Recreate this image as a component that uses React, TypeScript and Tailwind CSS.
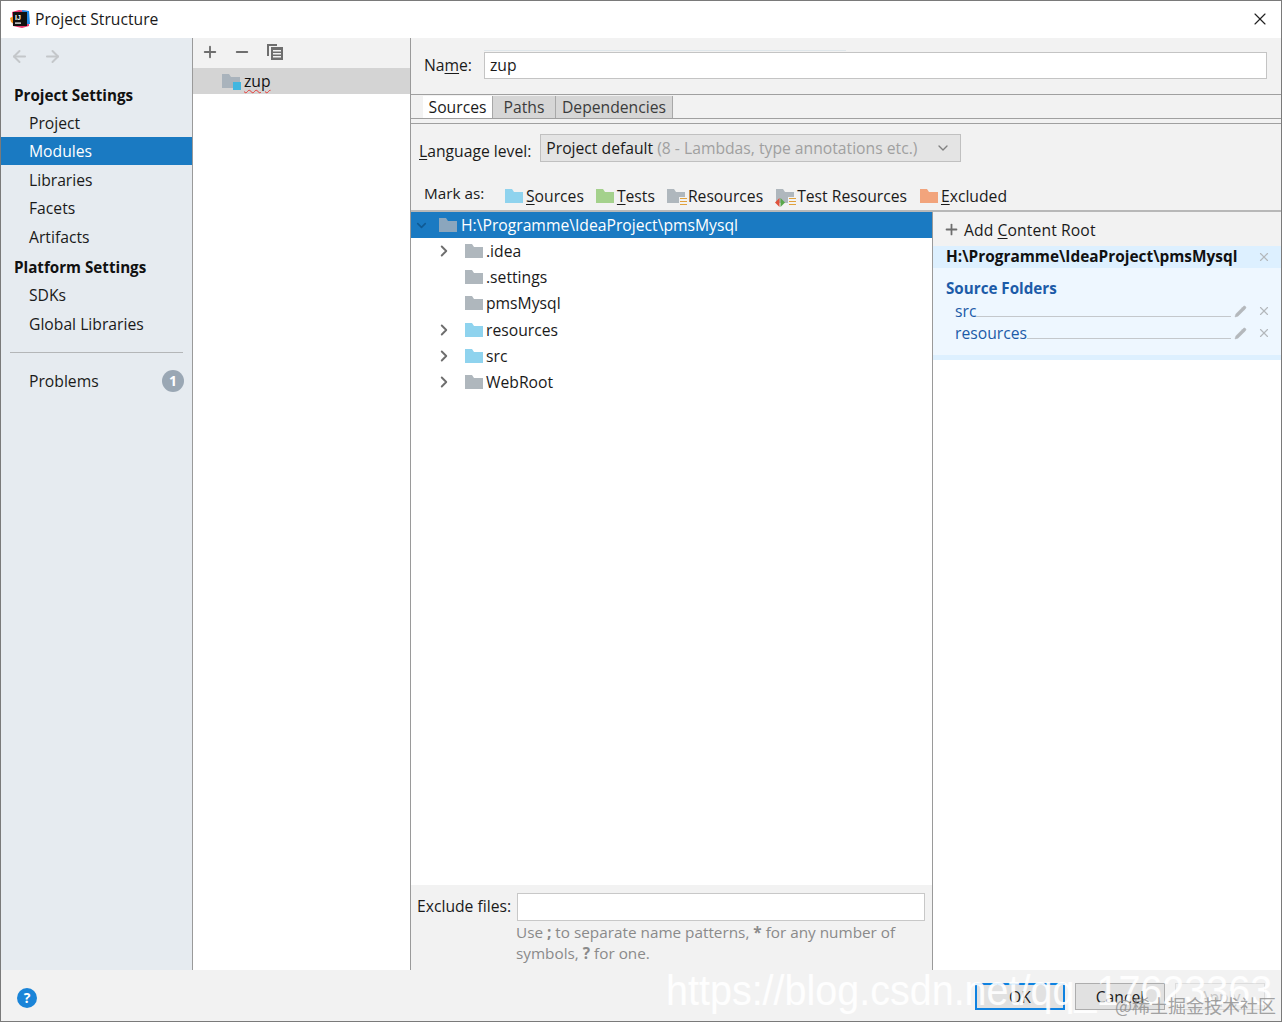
import type { ReactNode } from 'react';
import { Plus, Minus, ArrowLeft, ArrowRight, ChevronDown, ChevronRight, X, Pencil } from 'lucide-react';

const font = 'font-["Open_Sans","Noto_Sans","Noto_Sans_CJK_SC",sans-serif]';

function Folder({ color = '#afb7bd', className = '' }: { color?: string; className?: string }) {
  return (
    <svg width="18" height="14" viewBox="0 0 18 14" className={`shrink-0 ${className}`}>
      <path d="M0 0h7l2 3h9v11H0z" fill={color} />
    </svg>
  );
}

function U({ children }: { children: ReactNode }) {
  return <span className="underline underline-offset-2 decoration-1">{children}</span>;
}

function NavItem({ label, active, h = 'h-[29px]' }: { label: string; active?: boolean; h?: string }) {
  return (
    <div className={`${h} flex items-center pl-7 ${active ? 'bg-[#1a7ac2] text-white' : 'text-[#1a1a1a]'}`}>
      {label}
    </div>
  );
}

function TreeRow({ label, color, arrow }: { label: string; color?: string; arrow?: boolean }) {
  return (
    <div className="h-[26.2px] flex items-center text-[#1a1a1a]">
      <div className="w-[54px] pl-[28px] shrink-0">
        {arrow && <ChevronRight size={18} strokeWidth={2.5} className="text-[#6e6e6e] -ml-[4px]" />}
      </div>
      <Folder color={color} />
      <span className="ml-[3px]">{label}</span>
    </div>
  );
}

function MarkItem({ color, children, badge }: { color: string; children: ReactNode; badge?: ReactNode }) {
  return (
    <div className="flex items-center">
      <div className="relative w-[18px] h-[14px] mr-[3px]">
        <Folder color={color} />
        {badge}
      </div>
      <span>{children}</span>
    </div>
  );
}

function SourceRow({ label }: { label: string }) {
  return (
    <div className="h-[22px] flex items-center pl-[22px] pr-[10px] text-[#1c5ba8]">
      <span>{label}</span>
      <div className="flex-1 h-[1px] bg-[#c4c8cc] mt-[10px]" />
      <Pencil size={13} fill="#b4b8bc" strokeWidth={1} className="text-[#b4b8bc] ml-[3px] mr-[10px]" />
      <X size={14} className="text-[#b4b8bc]" />
    </div>
  );
}

function ResBadge() {
  return (
    <div className="absolute right-[-3px] bottom-[-3px] w-[9px] h-[9px] bg-[#f2f2f2] flex flex-col justify-between p-[1px]">
      <div className="h-[1px] bg-[#e0a13c]" />
      <div className="h-[1px] bg-[#e0a13c]" />
      <div className="h-[1px] bg-[#e0a13c]" />
    </div>
  );
}

function TestResBadge() {
  return (
    <>
      <ResBadge />
      <svg width="10" height="9" viewBox="0 0 10 9" className="absolute left-[-1px] bottom-[-4px]">
        <path d="M4.5 0v9L0 4.5z" fill="#e0533c" />
        <path d="M5.5 0v9L10 4.5z" fill="#59a84a" />
      </svg>
    </>
  );
}

export default function App() {
  return (
    <div className={`${font} relative w-[1282px] h-[1022px] overflow-hidden border border-[#7a7a7a] bg-white text-[15.7px] leading-5 flex flex-col`}>
      {/* title bar */}
      <div className="h-[37px] shrink-0 flex items-center pl-[9px] pr-[11px] pb-[2px] bg-white text-[#1a1a1a]">
        <svg width="20" height="20" viewBox="0 0 20 20" className="shrink-0">
          <path d="M2 3l7-2 9 1 1 15-7 2-9-2z" fill="#e8356d" />
          <path d="M12 1l7 1 1 13-6 0z" fill="#1e88e5" />
          <path d="M0 9l4-2 0 8-3-2z" fill="#f7941e" />
          <rect x="3" y="3" width="14" height="14" fill="#111" />
          <rect x="5" y="13.5" width="6" height="1.2" fill="#fff" />
          <text x="5" y="10.5" fontSize="7" fontWeight="700" fill="#fff" fontFamily="Liberation Sans">IJ</text>
        </svg>
        <span className="ml-[5px] flex-1">Project Structure</span>
        <X size={20} strokeWidth={1.4} className="text-[#222]" />
      </div>

      <div className="flex-1 min-h-0 flex">
        {/* sidebar */}
        <div className="w-[192px] shrink-0 bg-[#e6ebf0] border-r border-[#9a9a9a] flex flex-col">
          <div className="h-[36px] flex items-center pl-[9px] gap-[14px] text-[#c4c7ca]">
            <ArrowLeft size={19} strokeWidth={2.5} />
            <ArrowRight size={19} strokeWidth={2.5} />
          </div>
          <div className="h-[35px] pt-[11px] pl-[13px] font-bold text-[15.2px] text-[#111]">Project Settings</div>
          <NavItem label="Project" h="h-[27px]" />
          <div className="h-[1px]" />
          <NavItem label="Modules" active h="h-[28px]" />
          <NavItem label="Libraries" />
          <NavItem label="Facets" h="h-[28px]" />
          <NavItem label="Artifacts" />
          <div className="h-[30px] pt-[6px] pl-[13px] font-bold text-[15.2px] text-[#111]">Platform Settings</div>
          <NavItem label="SDKs" h="h-[28px]" />
          <NavItem label="Global Libraries" />
          <div className="mx-[9px] mt-[14px] h-[1px] bg-[#b4b6b8]" />
          <div className="mt-[14px] h-[28px] flex items-center pl-7 pr-[8px] justify-between text-[#1a1a1a]">
            <span>Problems</span>
            <span className="w-[22px] h-[22px] rounded-full bg-[#9aa7b4] text-white font-bold text-[14px] flex items-center justify-center">1</span>
          </div>
        </div>

        {/* module list */}
        <div className="w-[218px] shrink-0 border-r border-[#9a9a9a] flex flex-col bg-white">
          <div className="h-[30px] bg-[#f2f2f2] flex items-center pl-[8px] pb-[2px] text-[#6e6e6e]">
            <Plus size={18} strokeWidth={2.5} />
            <Minus size={18} strokeWidth={2.5} className="ml-[14px]" />
            <svg width="18" height="18" viewBox="0 0 18 18" className="ml-[15px]">
              <path d="M1 1h10v2H3v10H1z" fill="#6e6e6e" />
              <path d="M5 4h12v13H5zM7 7v1.5h8V7zm0 3v1.5h8V10zm0 3v1.5h8V13z" fill="#6e6e6e" fillRule="evenodd" />
            </svg>
          </div>
          <div className="h-[26px] bg-[#d4d4d4] flex items-center pl-[29px]">
            <div className="relative w-[18px] h-[14px] mr-[4px]">
              <Folder color="#a9b3bc" />
              <div className="absolute right-[-1px] bottom-[-2px] w-[8px] h-[8px] bg-[#40b6e0]" />
            </div>
            <span className="text-[#111] underline decoration-wavy decoration-[#e53935] decoration-1 underline-offset-2">zup</span>
          </div>
        </div>

        {/* module settings */}
        <div className="relative flex-1 min-w-0 bg-[#f2f2f2] flex flex-col text-[#1a1a1a]">
          <div className="absolute left-[73px] top-[12px] w-[362px] h-[1px] bg-[#dfe6ea]" />
          <div className="h-[57px] shrink-0 flex items-center pl-[13px] pr-[14px] pb-[2px] border-b border-[#a0a0a0]">
            <span className="w-[60px] shrink-0">Na<U>m</U>e:</span>
            <div className="flex-1 h-[27px] bg-white border border-[#c4c4c4] pl-[5px] flex items-center">zup</div>
          </div>
          <div className="h-[24px] shrink-0 flex pl-[12px] pt-[1px] border-b border-[#a0a0a0]">
            <div className="w-[70px] flex items-center justify-center bg-white border-r border-[#a8a8a8]">Sources</div>
            <div className="w-[63px] flex items-center justify-center bg-[#d6d6d6] border-r border-[#a8a8a8] text-[#3c3c3c]">Paths</div>
            <div className="w-[117px] flex items-center justify-center bg-[#d6d6d6] border-r border-[#a8a8a8] text-[#3c3c3c]">Dependencies</div>
          </div>
          <div className="h-[5px] shrink-0 border-b border-[#a0a0a0]" />
          <div className="h-[88px] shrink-0 border-b-2 border-[#b8b8b8] flex flex-col">
            <div className="h-[28px] mt-[10px] flex items-center pl-[8px]">
              <span className="mt-[5px]"><U>L</U>anguage level:</span>
              <div className="ml-[9px] w-[421px] h-[28px] bg-[#e4e4e4] border border-[#c0c0c0] flex items-center pl-[5px] pr-[9px] justify-between">
                <span>Project default <span className="text-[#a0a0a0]">(8 - Lambdas, type annotations etc.)</span></span>
                <ChevronDown size={16} className="text-[#808080]" />
              </div>
            </div>
            <div className="mt-[23px] flex items-center pl-[13px]">
              <span className="w-[81px] -mt-[5px] text-[15.3px]">Mark as:</span>
              <div className="flex items-center gap-[12px] mt-[1px]">
                <MarkItem color="#8fd3ee"><U>S</U>ources</MarkItem>
                <MarkItem color="#a4d18c"><U>T</U>ests</MarkItem>
                <MarkItem color="#afb7bd" badge={<ResBadge />}>Resources</MarkItem>
                <div className="ml-[1px]">
                  <MarkItem color="#afb7bd" badge={<TestResBadge />}>Test Resources</MarkItem>
                </div>
                <div className="ml-[1px]">
                  <MarkItem color="#f2a47c"><U>E</U>xcluded</MarkItem>
                </div>
              </div>
            </div>
          </div>

          <div className="flex-1 min-h-0 flex">
            <div className="w-[522px] shrink-0 border-r border-[#9a9a9a] flex flex-col">
              <div className="flex-1 bg-white">
                <div className="h-[26px] bg-[#1a7ac2] flex items-center text-white pl-[3px]">
                  <ChevronDown size={15} strokeWidth={2.5} className="text-[#0f5a94]" />
                  <Folder color="#8ba6bd" className="ml-[10px]" />
                  <span className="ml-[4px]">H:\Programme\IdeaProject\pmsMysql</span>
                </div>
                <TreeRow label=".idea" arrow />
                <TreeRow label=".settings" />
                <TreeRow label="pmsMysql" />
                <TreeRow label="resources" color="#8fd3ee" arrow />
                <TreeRow label="src" color="#8fd3ee" arrow />
                <TreeRow label="WebRoot" arrow />
              </div>
              <div className="h-[85px] shrink-0 pt-[8px] pl-[6px] pr-[7px]">
                <div className="flex items-center h-[28px]">
                  <span className="w-[100px] shrink-0 -mt-[2px]">Exclude files:</span>
                  <div className="flex-1 h-[28px] bg-white border border-[#c8c8c8]" />
                </div>
                <p className="ml-[99px] mt-[1px] text-[#8a8a8a] text-[15.3px] leading-[21px]">
                  Use <b>;</b> to separate name patterns, <b>*</b> for any number of symbols, <b>?</b> for one.
                </p>
              </div>
            </div>
            <div className="flex-1 min-w-0 bg-white flex flex-col">
              <div className="h-[34px] bg-[#f2f2f2] flex items-center pl-[10px]">
                <Plus size={17} strokeWidth={2.5} className="text-[#6e6e6e]" />
                <span className="ml-[4px] mt-[1px] tracking-[0.1px]">Add <U>C</U>ontent Root</span>
              </div>
              <div className="h-[22px] bg-[#ddf0ff] flex items-center pl-[13px] pr-[10px] justify-between font-bold text-[15.4px] text-[#111]">
                <span>H:\Programme\IdeaProject\pmsMysql</span>
                <X size={14} className="text-[#b4b8bc]" />
              </div>
              <div className="h-[92px] bg-[#eef7ff] border-b-[5px] border-[#ddf0ff]">
                <div className="pl-[13px] pt-[10px] h-[32px] font-bold text-[15.2px] text-[#1c5ba8]">Source Folders</div>
                <SourceRow label="src" />
                <SourceRow label="resources" />
              </div>
            </div>
          </div>
        </div>
      </div>

      {/* footer */}
      <div className="h-[51px] shrink-0 bg-[#f2f2f2] flex items-center pl-[16px] pr-[16px] text-[#1a1a1a]">
        <div className="w-[20px] h-[20px] mt-[4px] rounded-full bg-[#1a84d8] text-white font-bold text-[14px] flex items-center justify-center">?</div>
        <div className="ml-auto flex gap-[10px] mt-[2px]">
          <div className="w-[90px] h-[27px] border-2 border-[#0f82e0] bg-[#e1e1e1] flex items-center justify-center">OK</div>
          <div className="w-[90px] h-[27px] border border-[#adadad] bg-[#e1e1e1] flex items-center justify-center">Cancel</div>
          <div className="w-[90px] h-[27px] border border-[#dcdcdc] bg-[#f0f0f0] flex items-center justify-center text-[#c8c8c8]">Apply</div>
        </div>
      </div>

      {/* watermark */}
      <div className="absolute left-[665px] top-[964px] origin-top-left scale-y-[1.1] font-['Liberation_Sans',sans-serif] text-[39.5px] leading-[44px] text-white/90 whitespace-nowrap">
        https://blog.csdn.net/qq_17623363
      </div>
      <div className="absolute left-[1114px] top-[993px] font-['Noto_Sans_CJK_SC',sans-serif] text-[18px] leading-[22px] text-[#8c8c8c]/80 whitespace-nowrap">
        @稀土掘金技术社区
      </div>
    </div>
  );
}
